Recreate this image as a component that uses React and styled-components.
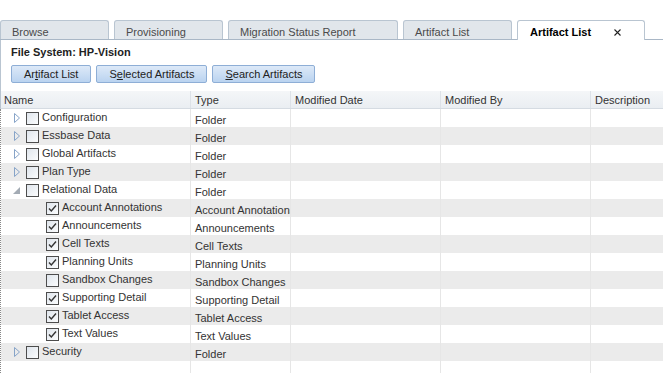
import React from 'react';
import styled, { createGlobalStyle } from 'styled-components';

const GlobalStyle = createGlobalStyle`
  html, body {
    margin: 0;
    padding: 0;
    background: #fff;
    overflow: hidden;
  }
  body {
    font-family: "Liberation Sans", Arial, sans-serif;
    font-size: 11px;
    color: #333;
  }
`;

const Page = styled.div`
  width: 663px;
  height: 373px;
  padding-top: 20px;
  box-sizing: border-box;
  overflow: hidden;
`;

const TabStrip = styled.div`
  display: flex;
  align-items: flex-end;
  gap: 5px;
  height: 19px;
  border-bottom: 1px solid #a9b7c6;
`;

const Tab = styled.div`
  box-sizing: border-box;
  display: flex;
  flex: none;
  width: ${(p) => p.$width}px;
  height: ${(p) => (p.$active ? 20 : 19)}px;
  margin-bottom: ${(p) => (p.$active ? -1 : 0)}px;
  padding: 4px 0 0 ${(p) => (p.$active ? 12 : 11)}px;
  border: 1px solid #b9c5d1;
  border-bottom: none;
  border-radius: 3px 3px 0 0;
  background: ${(p) => (p.$active ? '#fff' : '#e1e6eb')};
  color: ${(p) => (p.$active ? '#000' : '#4a4a4a')};
  font-weight: ${(p) => (p.$active ? 700 : 400)};
  line-height: 14px;
  white-space: nowrap;
`;

const Close = styled.svg`
  margin: 4px 0 0 23px;
  flex: none;
`;

const Panel = styled.div`
  border-left: 1px solid #b9c5d1;
  padding: 5px 0 8px 10px;
`;

const Title = styled.div`
  font-weight: 700;
  line-height: 14px;
  color: #222;
`;

const Toolbar = styled.div`
  display: flex;
  gap: 5px;
  margin-top: 6px;
`;

const Button = styled.button`
  box-sizing: border-box;
  height: 18px;
  padding: 1px 12px 0;
  border: 1px solid #8eaed6;
  border-radius: 2px;
  background: linear-gradient(#dde9f8, #bad3f0);
  font-family: inherit;
  font-size: 11px;
  line-height: 15px;
  color: #222;
  cursor: pointer;
`;

const COLS = '189px 100px 150px 150px 1fr';

const Header = styled.div`
  display: grid;
  grid-template-columns: ${COLS};
  box-sizing: border-box;
  height: 18px;
  border-left: 1px solid #b9c5d1;
  border-bottom: 1px solid #d5dbe2;
  background: linear-gradient(#f4f6f8, #eaeef2);
`;

const HeaderCell = styled.div`
  padding: 2px 0 0 ${(p) => (p.$first ? 3 : 4)}px;
  border-left: ${(p) => (p.$first ? 'none' : '1px solid #dde2e8')};
  line-height: 14px;
  color: #333;
  white-space: nowrap;
  overflow: hidden;
`;

const Body = styled.div`
  border-left: 1px dotted #888;
`;

const Row = styled.div`
  display: grid;
  grid-template-columns: ${COLS};
  height: 18px;
  background: ${(p) => (p.$striped ? '#ebebeb' : '#fff')};
`;

const Cell = styled.div`
  padding: 4px 0 0 4px;
  border-left: 1px solid #e6e6e6;
  line-height: 14px;
  white-space: nowrap;
  overflow: hidden;
`;

const NameCell = styled.div`
  display: flex;
  align-items: flex-start;
  padding: 1px 0 0 ${(p) => 12 + p.$level * 20}px;
  line-height: 14px;
  white-space: nowrap;
  overflow: hidden;
`;

const Toggle = styled.div`
  flex: none;
  width: 13px;
  height: 16px;
  display: flex;
  align-items: center;
`;

const Check = styled.div`
  flex: none;
  box-sizing: border-box;
  width: 13px;
  height: 13px;
  margin-top: 2px;
  border: 1px solid #4d4d4d;
  background: linear-gradient(135deg, #dfe5ec, #fbfcfd);
  display: flex;
  align-items: center;
  justify-content: center;
`;

const Label = styled.span`
  margin-left: 3px;
`;

const rows = [
  { name: 'Configuration', type: 'Folder', level: 0, toggle: 'closed' },
  { name: 'Essbase Data', type: 'Folder', level: 0, toggle: 'closed' },
  { name: 'Global Artifacts', type: 'Folder', level: 0, toggle: 'closed' },
  { name: 'Plan Type', type: 'Folder', level: 0, toggle: 'closed' },
  { name: 'Relational Data', type: 'Folder', level: 0, toggle: 'open' },
  { name: 'Account Annotations', type: 'Account Annotations', level: 1, checked: true },
  { name: 'Announcements', type: 'Announcements', level: 1, checked: true },
  { name: 'Cell Texts', type: 'Cell Texts', level: 1, checked: true },
  { name: 'Planning Units', type: 'Planning Units', level: 1, checked: true },
  { name: 'Sandbox Changes', type: 'Sandbox Changes', level: 1 },
  { name: 'Supporting Detail', type: 'Supporting Detail', level: 1, checked: true },
  { name: 'Tablet Access', type: 'Tablet Access', level: 1, checked: true },
  { name: 'Text Values', type: 'Text Values', level: 1, checked: true },
  { name: 'Security', type: 'Folder', level: 0, toggle: 'closed' },
  { empty: true },
];

const tabs = [
  { label: 'Browse', width: 109 },
  { label: 'Provisioning', width: 109 },
  { label: 'Migration Status Report', width: 170 },
  { label: 'Artifact List', width: 109 },
];

const Arrow = ({ open }) =>
  open ? (
    <svg width="7" height="7" viewBox="0 0 7 7" style={{ marginLeft: 0 }}>
      <polygon points="7,0 7,7 0,7" fill="#a3abb4" />
    </svg>
  ) : (
    <svg width="7" height="10" viewBox="0 0 7 10" style={{ marginLeft: 1 }}>
      <polygon points="0.5,0.5 5.5,5 0.5,9.5" fill="none" stroke="#87a4c8" strokeWidth="1" />
    </svg>
  );

const Tick = () => (
  <svg width="11" height="11" viewBox="0 0 11 11">
    <path d="M2 5.5 L4.3 8 L9 2.5" fill="none" stroke="#333" strokeWidth="1.4" />
  </svg>
);

export default function App() {
  return (
    <>
      <GlobalStyle />
      <Page>
        <TabStrip>
          {tabs.map((t) => (
            <Tab key={t.label} $width={t.width}>
              {t.label}
            </Tab>
          ))}
          <Tab $width={128} $active>
            Artifact List
            <Close width="7" height="7" viewBox="0 0 7 7">
              <path d="M0.5 0.5 L6.5 6.5 M6.5 0.5 L0.5 6.5" stroke="#222" strokeWidth="1.1" />
            </Close>
          </Tab>
        </TabStrip>

        <Panel>
          <Title>File System: HP-Vision</Title>
          <Toolbar>
            <Button>
              Ar<u>t</u>ifact List
            </Button>
            <Button>
              S<u>e</u>lected Artifacts
            </Button>
            <Button>
              <u>S</u>earch Artifacts
            </Button>
          </Toolbar>
        </Panel>

        <Header>
          <HeaderCell $first>Name</HeaderCell>
          <HeaderCell>Type</HeaderCell>
          <HeaderCell>Modified Date</HeaderCell>
          <HeaderCell>Modified By</HeaderCell>
          <HeaderCell>Description</HeaderCell>
        </Header>

        <Body>
          {rows.map((r, i) => (
            <Row key={i} $striped={i % 2 === 1}>
              {r.empty ? (
                <NameCell $level={0} />
              ) : (
                <NameCell $level={r.level}>
                  <Toggle>{r.toggle && <Arrow open={r.toggle === 'open'} />}</Toggle>
                  <Check>{r.checked && <Tick />}</Check>
                  <Label>{r.name}</Label>
                </NameCell>
              )}
              <Cell>{r.type}</Cell>
              <Cell />
              <Cell />
              <Cell />
            </Row>
          ))}
        </Body>
      </Page>
    </>
  );
}
